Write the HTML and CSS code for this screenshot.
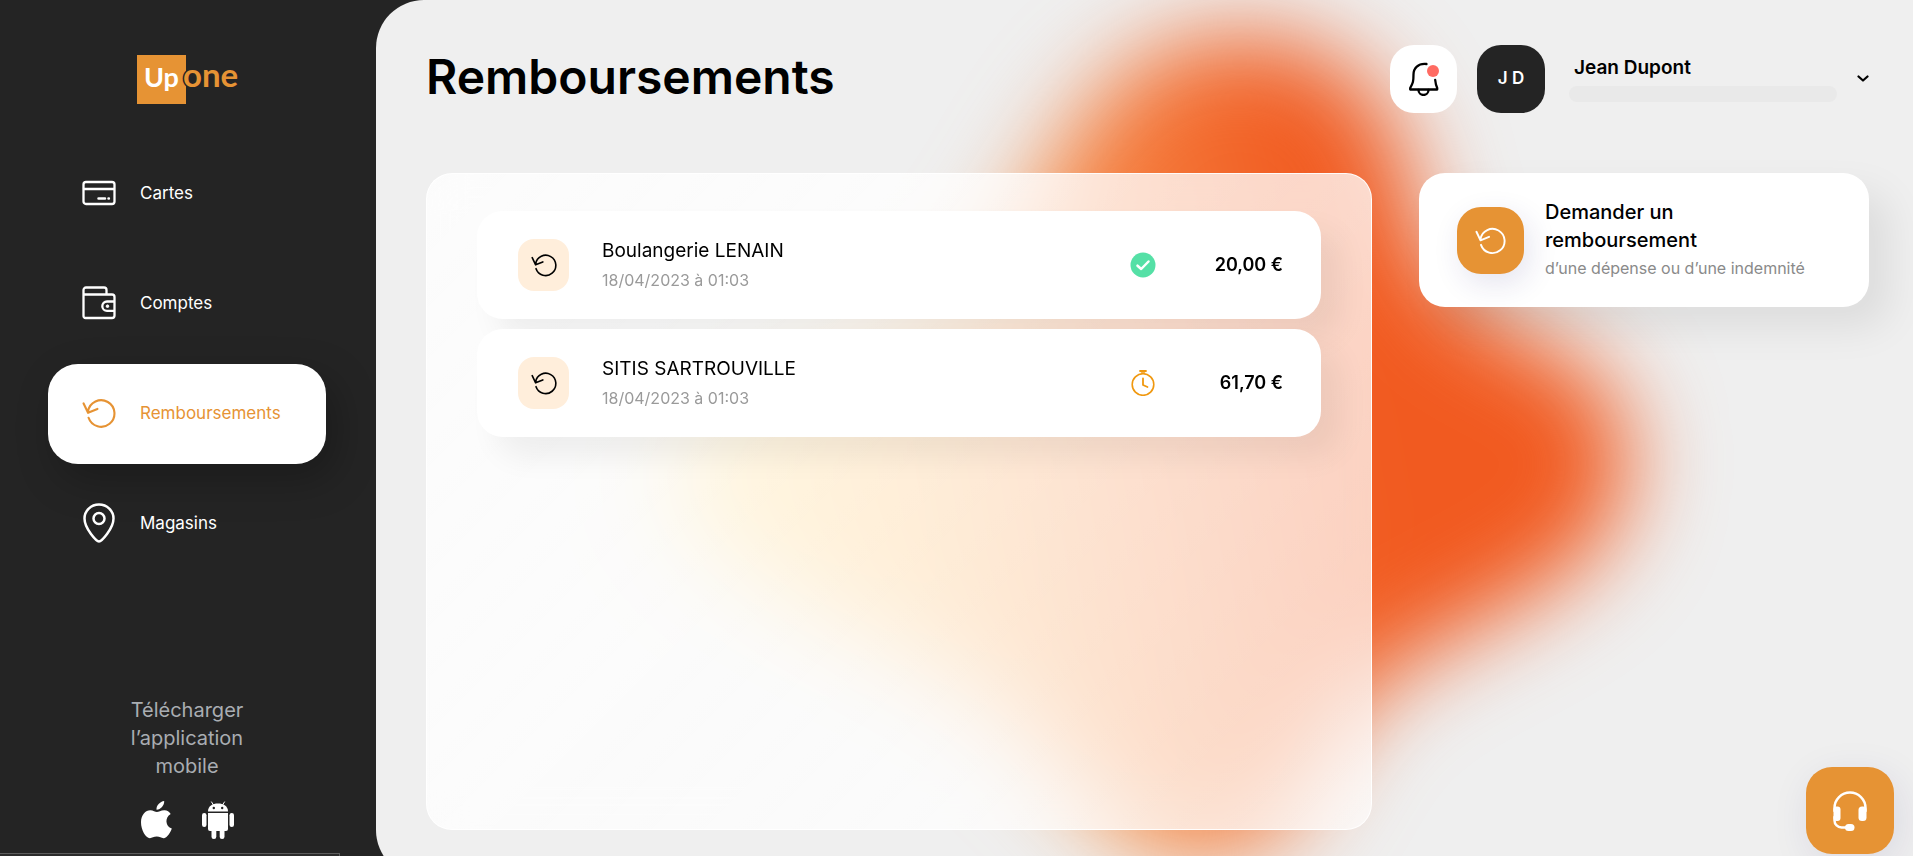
FILE: index.html
```html
<!DOCTYPE html>
<html lang="fr">
<head>
    <meta charset="UTF-8">
    <meta name="viewport" content="width=device-width, initial-scale=1.0">
    <title>Remboursements</title>
    <link rel="stylesheet" href="styles.css">
</head>
<body>
    <!-- icons used more than once -->
    <svg class="defs" width="0" height="0" aria-hidden="true">
        <symbol id="refund" viewBox="0 0 32 32">
            <path d="M5.700 14.500A12.500 12.500 0 1 1 6.200 20.500M1.500 7l4.200 8.800L14.500 12.200" fill="none" stroke="currentColor" stroke-width="2" stroke-linecap="round" stroke-linejoin="round"/>
        </symbol>
    </svg>

    <div class="page">
        <aside class="sidebar">
            <a href="#" class="logo" aria-label="Up one">
                <svg width="101" height="50" viewBox="0 0 101 50">
                    <rect x="0" y="0" width="49" height="49" fill="#e69334"/>
                    <text class="logoOne" x="46" y="32">one</text>
                    <text class="logoUp" x="7" y="32">Up</text>
                </svg>
            </a>
            <nav>
                <ul class="menu">
                    <li>
                        <a href="#">
                            <svg width="34" height="34" viewBox="0 0 34 34" fill="none" stroke="currentColor" stroke-width="2.300" stroke-linecap="round">
                                <rect x="1.500" y="6" width="31" height="22" rx="2.500"/>
                                <path d="M2 13h30"/>
                                <path d="M16.500 22.500h6.500M26.500 22.500h.4" stroke-width="2.500"/>
                            </svg>
                            Cartes
                        </a>
                    </li>
                    <li>
                        <a href="#">
                            <svg width="34" height="34" viewBox="0 0 34 34" fill="none" stroke="currentColor" stroke-width="2.300" stroke-linejoin="round">
                                <path d="M1.500 8.500h28.500a2.500 2.500 0 0 1 2.500 2.500v18.500a2.500 2.500 0 0 1-2.500 2.500H3.500a2 2 0 0 1-2-2V4a2.500 2.500 0 0 1 2.500-2.500h18a2.500 2.500 0 0 1 2.500 2.500v4"/>
                                <path d="M32.500 15.500h-7.500a4.700 4.700 0 0 0 0 9.400h7.500"/>
                                <circle cx="25.500" cy="20.200" r="1.300" fill="currentColor" stroke-width="1"/>
                            </svg>
                            Comptes
                        </a>
                    </li>
                    <li>
                        <a href="#" class="active" aria-current="page">
                            <svg width="34" height="34"><use href="#refund"/></svg>
                            Remboursements
                        </a>
                    </li>
                    <li>
                        <a href="#">
                            <svg width="34" height="40" viewBox="0 0 34 40" fill="none" stroke="currentColor" stroke-width="2.500">
                                <path d="M17 38.500C14.500 38.500 2.500 25.500 2.500 15.500a14.500 14 0 0 1 29 0c0 10-12 23-14.500 23z"/>
                                <circle cx="17" cy="15.500" r="5.500"/>
                            </svg>
                            Magasins
                        </a>
                    </li>
                </ul>
            </nav>
            <div class="download">
                <p>Télécharger l’application mobile</p>
                <div class="stores">
                    <a href="#" aria-label="App Store">
                        <svg width="31" height="38" viewBox="0 0 31 38" fill="currentColor">
                            <path d="M23.200 0c.3 4.300-3.700 8.800-7.700 8.700C15.100 4.400 19 .6 23.200 0z"/>
                            <path d="M29.700 12.900c-6.300 3.700-5.300 12.300 1.100 14.700-1.200 3.400-4.400 9.300-7.800 9.600-2.700.2-4-1.600-7.200-1.600s-4.700 1.600-7 1.600C4.900 37.100 0 29.200 0 21.300 0 13.800 4.600 9.400 9.300 9.300c2.800 0 5 1.800 6.600 1.800 1.600 0 4.300-2.100 7.700-1.900 2.500.1 4.800 1.400 6.100 3.700z"/>
                        </svg>
                    </a>
                    <a href="#" aria-label="Google Play">
                        <svg width="32" height="38" viewBox="0 0 32 38" fill="currentColor">
                            <path d="M6 10.500C6 5 10.500 2.500 16 2.500S26 5 26 10.500z"/>
                            <path d="M11.500 4L9.300.6M20.500 4L22.700.6" stroke="currentColor" stroke-width="1"/>
                            <path d="M6 12h20v16a2 2 0 0 1-2 2H8a2 2 0 0 1-2-2z"/>
                            <rect x="0" y="12" width="4.500" height="14" rx="2.200"/>
                            <rect x="27.500" y="12" width="4.500" height="14" rx="2.200"/>
                            <rect x="9.500" y="26" width="4.800" height="12" rx="2.300"/>
                            <rect x="17.700" y="26" width="4.800" height="12" rx="2.300"/>
                            <circle cx="11.800" cy="7" r="1.200" fill="#242424"/>
                            <circle cx="20.200" cy="7" r="1.200" fill="#242424"/>
                        </svg>
                    </a>
                </div>
            </div>
        </aside>

        <main class="main">
            <svg class="blob" width="1537" height="878" viewBox="376 0 1537 878" aria-hidden="true">
                <defs>
                    <linearGradient id="blobColor" gradientUnits="userSpaceOnUse" x1="720" y1="480" x2="1340" y2="370">
                        <stop offset="0" stop-color="#ffd670"/>
                        <stop offset=".3" stop-color="#fcb860"/>
                        <stop offset=".65" stop-color="#f58443"/>
                        <stop offset="1" stop-color="#f15a20"/>
                    </linearGradient>
                    <filter id="blobBlur" x="-30%" y="-30%" width="160%" height="160%" color-interpolation-filters="sRGB">
                        <feGaussianBlur stdDeviation="46"/>
                    </filter>
                </defs>
                <path d="M1240 35C1340 35 1400 100 1415 200C1425 290 1490 320 1555 350C1650 400 1650 510 1570 570C1490 630 1390 650 1340 730C1300 800 1280 855 1200 860C1110 860 1070 760 970 690C870 630 670 570 670 470C670 380 900 360 990 260C1050 180 1090 35 1240 35Z" fill="url(#blobColor)" filter="url(#blobBlur)"/>
            </svg>

            <header class="header">
                <h1>Remboursements</h1>
                <div class="tools">
                    <button type="button" class="bell" aria-label="Notifications">
                        <svg width="32" height="34" viewBox="0 0 32 34" fill="none" stroke="#000" stroke-width="2.300" stroke-linecap="round" stroke-linejoin="round">
                            <path d="M18.500 2C10 1 5.500 6.500 5.500 12.500c0 7-.5 8.500-3.300 13.500v1.500h27V26c-1.400-3-1.700-5-2-8"/>
                            <path d="M10.500 28a5 5 0 0 0 10 0"/>
                            <circle cx="25" cy="9" r="6" fill="#ff6b62" stroke="none"/>
                        </svg>
                    </button>
                    <span class="avatar">J D</span>
                    <button type="button" class="account">
                        <span class="accountText">
                            <strong>Jean Dupont</strong>
                            <span class="masked"></span>
                        </span>
                        <svg width="12" height="8" viewBox="0 0 12 8" fill="none" stroke="#000" stroke-width="2.200" stroke-linecap="round" stroke-linejoin="round">
                            <path d="M1.500 1.500L6 5.500l4.500-4"/>
                        </svg>
                    </button>
                </div>
            </header>

            <div class="content">
                <section class="panel">
                    <ul class="list">
                        <li class="row">
                            <span class="rowIcon"><svg width="26" height="26"><use href="#refund"/></svg></span>
                            <div class="rowText">
                                <h2>Boulangerie LENAIN</h2>
                                <p>18/04/2023 à 01:03</p>
                            </div>
                            <svg class="status" width="26" height="26" viewBox="0 0 26 26" fill="none" stroke-linecap="round" stroke-linejoin="round">
                                <circle cx="13" cy="13" r="12.500" fill="#55e0a6"/>
                                <path d="M7.500 13.700l3.700 3.300 7.300-7.500" stroke="#fff" stroke-width="2.500"/>
                            </svg>
                            <span class="amount">20,00 €</span>
                        </li>
                        <li class="row">
                            <span class="rowIcon"><svg width="26" height="26"><use href="#refund"/></svg></span>
                            <div class="rowText">
                                <h2>SITIS SARTROUVILLE</h2>
                                <p>18/04/2023 à 01:03</p>
                            </div>
                            <svg class="status" width="26" height="26" viewBox="0 0 26 26" fill="none" stroke="#f0980f" stroke-linecap="round" stroke-linejoin="round">
                                <circle cx="13" cy="14.500" r="10.800" stroke-width="1.600"/>
                                <path d="M13 8.500v6.500l4.500 2" stroke-width="1.800"/>
                                <path d="M10 1h6" stroke-width="1.800"/>
                                <path d="M11.500 3h3" stroke-width="1.500"/>
                            </svg>
                            <span class="amount">61,70 €</span>
                        </li>
                    </ul>
                </section>

                <a href="#" class="action">
                    <span class="actionIcon"><svg width="31" height="31"><use href="#refund"/></svg></span>
                    <span class="actionText">
                        <strong>Demander un remboursement</strong>
                        <small>d’une dépense ou d’une indemnité</small>
                    </span>
                </a>
            </div>
        </main>
    </div>

    <button type="button" class="help" aria-label="Aide">
        <svg width="36" height="40" viewBox="0 0 36 40" fill="none" stroke="#fff" stroke-width="2.500" stroke-linecap="round">
            <path d="M2.500 20v-3a15.500 15.500 0 0 1 31 0v3"/>
            <path d="M2.500 26v3.500a7 7 0 0 0 7 7H16"/>
            <rect x="1.500" y="15.500" width="7" height="14.500" rx="3" fill="#fff" stroke="none"/>
            <rect x="26.500" y="15.500" width="8" height="14.500" rx="3.500" fill="#fff" stroke="none"/>
            <rect x="13" y="33" width="9.500" height="7" rx="3.500" fill="#fff" stroke="none"/>
        </svg>
    </button>
    <div class="statusBar"></div>
</body>
</html>
```
FILE: styles.css
```css
*{margin: 0; padding: 0; box-sizing: border-box;}
li{list-style: none;}
a{color: inherit; text-decoration: none;}
button{border: none; background: none; font: inherit; color: inherit; cursor: pointer;}
svg{display: block; flex: none;}
body{font-family: Inter, "Liberation Sans", sans-serif; font-size: 18px; color: #000; background-color: #242424; height: 100vh; overflow: hidden;}
.defs{position: absolute;}

.page{display: flex; min-height: calc(100vh + 22px);}

/* sidebar */
.sidebar{width: 376px; flex: none; padding: 55px 50px 39px 48px; display: flex; flex-direction: column; color: #FFF;}
.logo{align-self: center; margin-bottom: 39px;}
.logoUp{font: 700 27px Lato, sans-serif; fill: #FFF;}
.logoOne{font: 700 33px Lato, sans-serif; fill: #e69334; stroke: #242424; stroke-width: 3px; paint-order: stroke;}
.menu{display: flex; flex-direction: column; gap: 10px;}
.menu a{display: flex; align-items: center; gap: 24px; height: 100px; padding: 0 0 2px 34px; border-radius: 30px; font-size: 17px;}
.menu .active{background-color: #FFF; color: #e69334; box-shadow: 10px 15px 40px rgba(0,0,0,.25);}
.download{margin-top: auto; text-align: center; color: #a9adb2;}
.download p{width: 140px; margin: 0 auto 21px; font-size: 20px; line-height: 28px;}
.stores{display: flex; justify-content: center; gap: 30px; color: #FFF;}

/* main */
.main{position: relative; flex: 1; min-width: 0; display: flex; flex-direction: column; padding: 45px 44px 48px 50px; border-radius: 48px 0 0 48px; background-color: #efefef; overflow: hidden;}
.blob{position: absolute; left: 0; top: 0;}
.header{position: relative; display: flex; justify-content: space-between; height: 68px; margin-bottom: 60px;}
.header h1{font-size: 48px; line-height: 64px; font-weight: 600;}
.tools{display: flex; align-items: center;}
.bell{display: flex; align-items: center; justify-content: center; width: 67px; height: 68px; border-radius: 24px; background-color: #FFF; margin-right: 20px;}
.avatar{width: 68px; height: 68px; border-radius: 24px; background-color: #242424; color: #FFF; font-size: 17px; line-height: 66px; font-weight: 600; text-align: center; margin-right: 24px;}
.account{display: flex; align-items: center; gap: 20px; text-align: left;}
.accountText{display: block; width: 268px;}
.accountText strong{display: block; padding-left: 5px; font-size: 19px; line-height: 28px; font-weight: 600;}
.masked{display: block; height: 16px; margin: 4px 0 2px; border-radius: 8px; background-color: #e9e9e9;}

.content{position: relative; flex: 1; display: grid; grid-template-columns: minmax(0, 1fr) 450px; gap: 47px;}
.panel{padding: 37px 50px; border: 1px solid rgba(255,255,255,.9); border-radius: 26px; background: linear-gradient(135deg, rgba(255,255,255,.82), rgba(255,255,255,.7)); backdrop-filter: blur(20px);}
.list{display: flex; flex-direction: column; gap: 10px;}
.row{display: flex; align-items: center; height: 108px; padding: 0 38px 0 41px; border-radius: 26px; background-color: #FFF; box-shadow: 20px 20px 30px rgba(0,0,0,.06);}
.rowIcon{display: flex; align-items: center; justify-content: center; width: 51px; height: 52px; margin-right: 33px; border-radius: 16px; background-color: #ffeedb;}
.rowText{flex: 1; padding-bottom: 2px;}
.rowText h2{font-size: 19px; line-height: 28px; font-weight: 400;}
.rowText p{font-size: 16px; line-height: 24px; margin-top: 3px; color: #9a9a9a;}
.amount{width: 127px; padding-bottom: 2px; font-size: 18px; font-weight: 600; text-align: right;}

.action{align-self: start; display: flex; align-items: center; height: 134px; padding: 0 38px; border-radius: 26px; background-color: #FFF; box-shadow: 20px 20px 40px rgba(0,0,0,.08);}
.actionIcon{display: flex; align-items: center; justify-content: center; flex: none; width: 67px; height: 67px; margin-right: 21px; border-radius: 24px; background-color: #e69334; color: #FFF; box-shadow: 5px 10px 30px rgba(40,30,120,.12);}
.actionText strong{display: block; width: 180px; font-size: 20px; line-height: 28px; font-weight: 500;}
.actionText small{display: block; font-size: 16px; line-height: 28px; color: #8a8a8a; white-space: nowrap;}

.help{position: fixed; right: 19px; bottom: 2px; display: flex; align-items: center; justify-content: center; width: 88px; height: 87px; border-radius: 26px; background-color: #e69334; box-shadow: 5px 10px 40px rgba(40,30,120,.1);}
.statusBar{position: fixed; left: 0; bottom: 0; width: 340px; height: 3px; border: 1px solid #5c5c5c; border-width: 1px 1px 0 0; background-color: #2b2b2b;}
```
